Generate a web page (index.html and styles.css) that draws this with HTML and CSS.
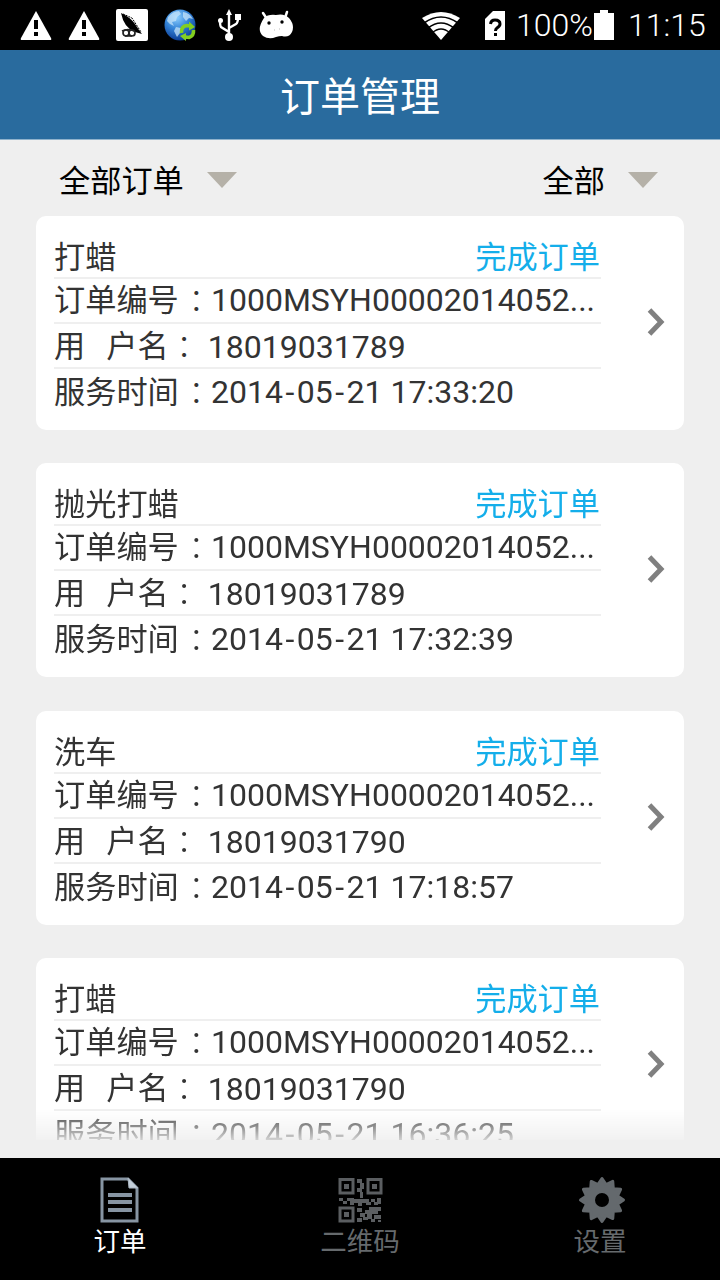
FILE: index.html
```
<!DOCTYPE html>
<html>

<head>
    <meta charset="utf-8">
    <title>订单管理</title>
    <link rel="stylesheet" href="styles.css">
</head>

<body>
    <div class="statusbar">
        <div class="notifications">
            <svg width="32" height="30" viewBox="0 0 32 30">
                <path d="M16 1L31 28Q32 30 30 30H2Q0 30 1 28Z" fill="#fff" />
                <path d="M14 10h4v9h-4zM14 22h4v4h-4z" />
            </svg>
            <svg width="32" height="30" viewBox="0 0 32 30">
                <path d="M16 1L31 28Q32 30 30 30H2Q0 30 1 28Z" fill="#fff" />
                <path d="M14 10h4v9h-4zM14 22h4v4h-4z" />
            </svg>
            <svg width="32" height="32" viewBox="0 0 32 32">
                <rect width="32" height="32" rx="2" fill="#fff" />
                <path d="M5 4Q14 8 19 15Q22 20 26 25L19 23Q8 19 5 4Z" />
                <path d="M7 5L16 9L25 23" fill="none" stroke="#000" stroke-dasharray="2 1" />
                <g fill="none" stroke="#222" stroke-width="1.7">
                    <circle cx="10" cy="24" r="3" />
                    <circle cx="16" cy="24" r="3" />
                    <path d="M6 22q6-3 12 0M9 27h7" />
                </g>
            </svg>
            <svg width="32" height="32" viewBox="0 0 32 32">
                <defs>
                    <radialGradient id="globe" cx=".4" cy=".25" r=".75">
                        <stop offset="0" stop-color="#8ed0ff" />
                        <stop offset=".5" stop-color="#3484d8" />
                        <stop offset="1" stop-color="#0b3d95" />
                    </radialGradient>
                </defs>
                <circle cx="16" cy="16" r="15.5" fill="url(#globe)" />
                <path d="M4 8Q9 2 15 2L17 5L13 8L12 12L8 13L10 17L6 15L3 12ZM19 3Q26 4 29 10L25 9L22 12L19 8ZM12 18L17 19L16 24L13 28L10 22Z" fill="#c6e4fa" opacity=".75" />
                <g fill="none" stroke="#83cf20" stroke-width="3.6">
                    <path d="M17.500 24Q17 17 23 16.500L26 17" />
                    <path d="M29.500 21Q30 27 25 28.500L21 28" />
                </g>
                <path d="M25 12.500L31 18L25 21.500ZM22 24L16 27L22 32Z" fill="#83cf20" />
            </svg>
            <svg width="32" height="32" viewBox="0 0 32 32">
                <g fill="none" stroke="#fff" stroke-width="2.400">
                    <path d="M17 5V27M17 23L9 18Q8 17 8 11M17 19L24 15Q26 14 26 8" />
                </g>
                <path d="M17 0L20 6H14ZM23 5h6v6h-6z" fill="#fff" />
                <circle cx="8.500" cy="11.500" r="2.500" fill="#fff" />
                <circle cx="17" cy="28" r="4" fill="#fff" />
            </svg>
            <svg width="36" height="30" viewBox="0 0 36 30">
                <path d="M5 3L9 9M29 2L27 8" stroke="#fff" stroke-width="2.500" stroke-linecap="round" />
                <path d="M6 8Q10 4 18 5Q26 3 31 8Q37 15 34 22Q31 28 24 26Q21 26 18 27Q11 30 5 26Q-2 20 6 8Z" fill="#fff" />
                <circle cx="11" cy="13" r="1.700" />
                <circle cx="24" cy="12" r="1.700" />
                <path d="M16 20h1M21 19h1" stroke="#bbb" />
            </svg>
        </div>
        <div class="system">
            <svg class="wifi" width="38" height="28" viewBox="0 0 38 28">
                <path d="M0 6Q19-6 38 6L19 28Z" fill="#fff" />
                <path d="M2 11Q19-1 36 11M6 16Q19 6 32 16M10 21Q19 13 28 21" fill="none" stroke="#000" stroke-width="1.600" />
            </svg>
            <svg class="sim" width="20" height="29" viewBox="0 0 20 29">
                <path d="M8 0H20V29H0V8Z" fill="#fff" />
                <path d="M5.500 13Q6 9 10 9Q15 9 15 13Q15 15 12 17Q10.500 18 10.500 20M10.500 22v3" fill="none" stroke="#000" stroke-width="3" />
            </svg>
            <span class="percent">100%</span>
            <svg class="battery" width="20" height="30" viewBox="0 0 20 30">
                <path d="M6 0h8v3h6v27H0V3h6z" fill="#fff" />
            </svg>
            <span class="clock">11:15</span>
        </div>
    </div>

    <div class="header">订单管理</div>

    <div class="filters">
        <div class="filter">全部订单<svg width="30" height="16" viewBox="0 0 30 16"><path d="M0 0H30L15 16Z" fill="#b5b1a8" /></svg></div>
        <div class="filter">全部<svg width="30" height="16" viewBox="0 0 30 16"><path d="M0 0H30L15 16Z" fill="#b5b1a8" /></svg></div>
    </div>

    <div class="orders">
        <div class="card">
            <div class="info">
                <div class="row top"><span>打蜡</span><span class="status">完成订单</span></div>
                <div class="row number"><span>订单编号</span><span class="colon">：</span><span class="value">1000MSYH00002014052...</span></div>
                <div class="row user"><span class="yong">用</span><span>户名</span><span class="colon">：</span><span class="value">18019031789</span></div>
                <div class="row time"><span>服务时间</span><span class="colon">：</span><span class="value">2014<i>-</i>05<i>-</i>21 17:33:20</span></div>
            </div>
            <svg class="arrow" width="18" height="28" viewBox="0 0 18 28"><path d="M2.500 2L14 14L2.500 26" /></svg>
        </div>
        <div class="card">
            <div class="info">
                <div class="row top"><span>抛光打蜡</span><span class="status">完成订单</span></div>
                <div class="row number"><span>订单编号</span><span class="colon">：</span><span class="value">1000MSYH00002014052...</span></div>
                <div class="row user"><span class="yong">用</span><span>户名</span><span class="colon">：</span><span class="value">18019031789</span></div>
                <div class="row time"><span>服务时间</span><span class="colon">：</span><span class="value">2014<i>-</i>05<i>-</i>21 17:32:39</span></div>
            </div>
            <svg class="arrow" width="18" height="28" viewBox="0 0 18 28"><path d="M2.500 2L14 14L2.500 26" /></svg>
        </div>
        <div class="card">
            <div class="info">
                <div class="row top"><span>洗车</span><span class="status">完成订单</span></div>
                <div class="row number"><span>订单编号</span><span class="colon">：</span><span class="value">1000MSYH00002014052...</span></div>
                <div class="row user"><span class="yong">用</span><span>户名</span><span class="colon">：</span><span class="value">18019031790</span></div>
                <div class="row time"><span>服务时间</span><span class="colon">：</span><span class="value">2014<i>-</i>05<i>-</i>21 17:18:57</span></div>
            </div>
            <svg class="arrow" width="18" height="28" viewBox="0 0 18 28"><path d="M2.500 2L14 14L2.500 26" /></svg>
        </div>
        <div class="card">
            <div class="info">
                <div class="row top"><span>打蜡</span><span class="status">完成订单</span></div>
                <div class="row number"><span>订单编号</span><span class="colon">：</span><span class="value">1000MSYH00002014052...</span></div>
                <div class="row user"><span class="yong">用</span><span>户名</span><span class="colon">：</span><span class="value">18019031790</span></div>
                <div class="row time"><span>服务时间</span><span class="colon">：</span><span class="value">2014<i>-</i>05<i>-</i>21 16:36:25</span></div>
            </div>
            <svg class="arrow" width="18" height="28" viewBox="0 0 18 28"><path d="M2.500 2L14 14L2.500 26" /></svg>
        </div>
    </div>

    <div class="tabs">
        <div class="tab active">
            <svg width="48" height="48" viewBox="0 0 48 48">
                <path d="M6 3H32L41 12V45H6Z" fill="none" stroke="#8795a3" stroke-width="3" />
                <path d="M32 2L42 12H33Z" fill="#c3ced9" stroke="#a9b5c1" />
                <path d="M12 19H36M12 26H36M12 34H36" stroke="#8795a3" stroke-width="4" />
            </svg>
            <span>订单</span>
        </div>
        <div class="tab">
            <svg width="48" height="48" viewBox="0 0 48 48">
                <g fill="none" stroke="#5b5e61" stroke-width="3">
                    <path d="M4 3.500H17V17H4ZM32 3.500H45V17H32ZM4 32H17V45H4Z" />
                </g>
                <path d="M8 8h5v5H8zM36 8h5v5h-5zM8 36h5v5H8zM21 3h5v4h-5zM24 7h4v6h-4zM21 12h5v4h-5zM24 16h3v6h-3zM3 22h4v3H3zM7 25h4v3H7zM11 22h7v3h-7zM14 25h4v4h-4zM18 23h15v4H18zM22 27h4v3h-4zM30 26h5v3h-5zM35 23h4v3h-4zM41 22h4v6h-4zM38 26h4v3h-4zM33 31h12v4H33zM29 34h13v4H29zM24 37h5v4h-5zM21 32h5v4h-5zM31 38h5v5h-5zM21 42h5v4h-5zM27 41h5v3h-5zM38 39h7v4h-7zM35 43h4v3h-4zM42 44h3v2h-3z" fill="#5b5e61" />
            </svg>
            <span>二维码</span>
        </div>
        <div class="tab">
            <svg width="48" height="48" viewBox="-26 -24 48 48" overflow="visible">
                <path d="M0-21.500L4.100-15.500L10.750-18.600L11.300-11.300L18.600-10.750L15.500-4.100L21.500 0L15.500 4.100L18.600 10.750L11.300 11.300L10.750 18.600L4.100 15.500L0 21.500L-4.100 15.500L-10.750 18.600L-11.300 11.300L-18.600 10.750L-15.500 4.100L-21.500 0L-15.500-4.100L-18.600-10.750L-11.300-11.300L-10.750-18.600L-4.100-15.500Z" fill="#64696d" stroke="#64696d" stroke-width="3" stroke-linejoin="round" />
                <circle r="7" />
            </svg>
            <span>设置</span>
        </div>
    </div>
</body>

</html>
```
FILE: styles.css
```
body {
    margin: 0;
    width: 720px;
    height: 1280px;
    display: flex;
    flex-direction: column;
    overflow: hidden;
    background: #efefef;
    font-family: Roboto, "Noto Sans CJK SC", sans-serif;
}

svg {
    display: block;
    flex: none;
}

i {
    font-style: normal;
    letter-spacing: 2.5px;
    margin-left: 2.5px;
}

.statusbar {
    height: 50px;
    flex: none;
    display: flex;
    justify-content: space-between;
    background: #000;
    color: #fff;
}

.notifications {
    display: flex;
    align-items: center;
    gap: 16px;
    padding-left: 20px;
}

.notifications svg:last-child {
    margin-left: -2px;
}

.system {
    display: flex;
    align-items: center;
    padding-right: 12px;
    font-size: 32px;
    line-height: 52px;
}

.wifi {
    margin: 2px 25px 0 0;
}

.sim {
    margin-right: 11px;
}

.percent {
    width: 78px;
    font-weight: 300;
}

.clock {
    margin-left: 14px;
    width: 80px;
    font-weight: 300;
}

.header {
    height: 90px;
    flex: none;
    background: #296b9e;
    border-bottom: 1px solid #8fb2cc;
    box-sizing: border-box;
    color: #fff;
    font-size: 40px;
    line-height: 95px;
    text-align: center;
}

.filters {
    height: 76px;
    flex: none;
    display: flex;
    justify-content: space-between;
    padding: 0 62px 0 59px;
    font-size: 31.2px;
    line-height: 83px;
    color: #000;
}

.filter {
    display: flex;
}

.filter svg {
    margin: 32px 0 0 23px;
}

.orders {
    height: 924px;
    flex: none;
    overflow: hidden;
    padding: 0 36px;
    -webkit-mask-image: linear-gradient(#000 892px, transparent 930px);
    mask-image: linear-gradient(#000 892px, transparent 930px);
}

.card {
    height: 214px;
    margin-bottom: 33.4px;
    box-sizing: border-box;
    padding: 18px 19px 0 18px;
    display: flex;
    justify-content: space-between;
    background: #fff;
    border-radius: 10px;
}

.info {
    width: 547px;
}

.row {
    height: 45px;
    box-sizing: border-box;
    border-bottom: 2px solid #efefef;
    display: flex;
    font-size: 31.2px;
    line-height: 46px;
    color: #333;
    white-space: nowrap;
}

.top {
    justify-content: space-between;
    line-height: 47px;
}

.status {
    color: #14aeea;
    margin-right: 1px;
}

.number {
    line-height: 43px;
}

.time {
    border-bottom: none;
    line-height: 47px;
}

.colon {
    font-family: "Noto Sans CJK TC", sans-serif;
    font-weight: 300;
    margin: -2px -2px 0 2px;
}

.value {
    font-size: 32px;
    margin-left: 1px;
}

.yong {
    margin-right: 21px;
}

.user .colon {
    margin-left: 0;
    margin-right: 0;
}

.user .value {
    margin-left: 8px;
}

.arrow {
    margin-top: 74px;
}

.arrow path {
    fill: none;
    stroke: #808080;
    stroke-width: 5;
}

.tabs {
    height: 122px;
    flex: none;
    margin-top: 18px;
    display: flex;
    background: #000;
}

.tab {
    flex: 1;
    display: flex;
    flex-direction: column;
    align-items: center;
    padding-top: 18px;
    font-size: 26.500px;
    line-height: 36px;
    color: #666a6d;
}

.active {
    color: #fff;
}
```
